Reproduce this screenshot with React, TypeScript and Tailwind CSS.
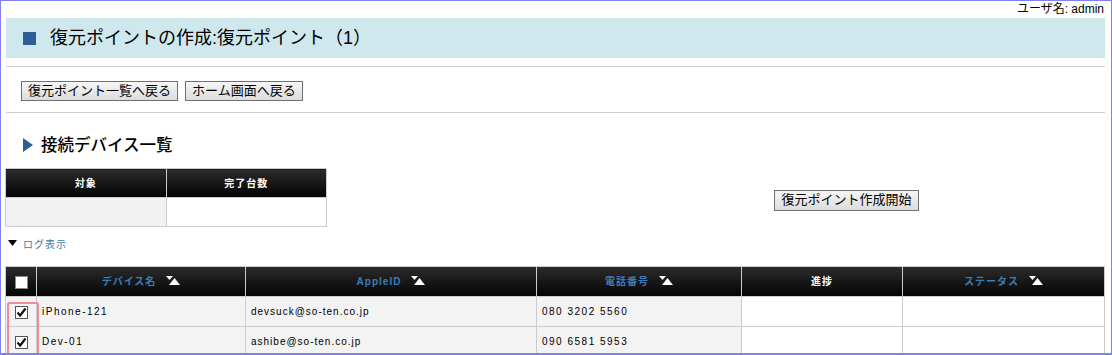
import React from "react";

const jp = { fontFamily: '"Liberation Sans", "Noto Sans CJK JP", sans-serif' };

function SortIcon() {
  return (
    <svg width="14" height="10" viewBox="0 0 14 10" className="inline-block ml-[10px] -mt-[2px] align-middle">
      <polygon points="0,0 7,0 3.5,4" fill="#fff" />
      <polygon points="3,9 14,9 8.5,2" fill="#fff" />
    </svg>
  );
}

function Check({ checked }: { checked?: boolean }) {
  return (
    <span className="inline-flex w-[13px] h-[13px] border border-[#555] bg-white items-center justify-center align-middle">
      {checked && (
        <svg width="11" height="11" viewBox="0 0 11 11">
          <path d="M1.5 5.5 L4.2 8.5 L9.5 1.5" stroke="#111" strokeWidth="2.2" fill="none" />
        </svg>
      )}
    </span>
  );
}

const btn =
  "h-[20px] px-[6px] border border-[#707070] bg-gradient-to-b from-[#f6f6f6] to-[#dcdcdc] text-[13px] leading-[18px] text-black whitespace-nowrap";

export default function App() {
  const rows = [
    { name: "iPhone-121", id: "devsuck@so-ten.co.jp", tel: "080 3202 5560" },
    { name: "Dev-01", id: "ashibe@so-ten.co.jp", tel: "090 6581 5953" },
  ];
  return (
    <div style={jp} className="w-[1112px] h-[355px] border border-[#8080f0] border-b-2 bg-white overflow-hidden relative">
      <div className="flex justify-end pr-[7px] pt-[1px] h-[17px] text-[12px] leading-[15px] text-black">
        ユーザ名: admin
      </div>
      <div className="ml-[4px] mr-[6px]">
        <div className="ml-[1px] h-[40px] bg-[#cfe8ee] flex items-center pl-[17px]">
          <span className="w-[13px] h-[13px] bg-[#2d5f96] mr-[14px]" />
          <span className="text-[18px] leading-[24px] text-black">復元ポイントの作成:復元ポイント（1）</span>
        </div>
        <div className="ml-[1px] mt-[8px] h-px bg-[#cccccc]" />
        <div className="mt-[14px] flex gap-[7px] pl-[16px]">
          <button className={btn}>復元ポイント一覧へ戻る</button>
          <button className={btn}>ホーム画面へ戻る</button>
        </div>
        <div className="ml-[1px] mt-[11px] h-px bg-[#cccccc]" />
        <div className="mt-[22px] flex items-center pl-[18px] h-[20px]">
          <svg width="10" height="14" viewBox="0 0 10 14" className="mr-[8px]">
            <polygon points="0,0 10,7 0,14" fill="#2d5f96" />
          </svg>
          <span className="text-[16.5px] leading-[20px] text-black font-medium">接続デバイス一覧</span>
        </div>
        <div className="mt-[13px] flex items-start">
          <table className="border-collapse w-[322px] text-[10px]">
            <thead>
              <tr className="h-[29px]">
                <th className="w-[161px] bg-gradient-to-b from-[#2c2c2c] to-[#050505] text-white font-bold border border-[#cccccc] tracking-[1px]">対象</th>
                <th className="w-[161px] bg-gradient-to-b from-[#2c2c2c] to-[#050505] text-white font-bold border border-[#cccccc] tracking-[1px]">完了台数</th>
              </tr>
            </thead>
            <tbody>
              <tr className="h-[29px]">
                <td className="bg-[#f1f1f1] border border-[#cccccc]" />
                <td className="bg-white border border-[#cccccc]" />
              </tr>
            </tbody>
          </table>
          <div className="ml-[447px] mt-[19px]">
            <button className={btn + " w-[145px] h-[21px] px-0 text-[12.5px]"}>復元ポイント作成開始</button>
          </div>
        </div>
        <div className="mt-[10px] flex items-center h-[14px] pl-[3px]">
          <svg width="9" height="6" viewBox="0 0 9 6" className="mr-[6px] -mt-[3px]">
            <polygon points="0,0 9,0 4.5,6" fill="#000" />
          </svg>
          <span className="text-[10px] text-[#3f7aa3] tracking-[1px]">ログ表示</span>
        </div>
        <table className="mt-[15px] border-collapse w-[1100px] text-[10px]">
          <thead>
            <tr className="h-[30px] bg-gradient-to-b from-[#2c2c2c] to-[#050505]">
              <th className="w-[31px] border border-[#cccccc]">
                <span className="inline-block w-[13px] h-[13px] bg-white border border-[#888] align-middle" />
              </th>
              <th className="w-[209px] border border-[#cccccc] text-[#3d7cba] font-bold tracking-[1px]">デバイス名<SortIcon /></th>
              <th className="w-[291px] border border-[#cccccc] text-[#3d7cba] font-bold tracking-[1px]">AppleID<SortIcon /></th>
              <th className="w-[205px] border border-[#cccccc] text-[#3d7cba] font-bold tracking-[1px]">電話番号<SortIcon /></th>
              <th className="w-[161px] border border-[#cccccc] text-white font-bold tracking-[1px]">進捗</th>
              <th className="border border-[#cccccc] text-[#3d7cba] font-bold tracking-[1px]">ステータス<SortIcon /></th>
            </tr>
          </thead>
          <tbody>
            {rows.map((r) => (
              <tr key={r.name} className="h-[30px] bg-[#f3f3f3]">
                <td className="border border-[#cccccc] text-center"><Check checked /></td>
                <td className="border border-[#cccccc] pl-[5px] tracking-[1.5px] text-black">{r.name}</td>
                <td className="border border-[#cccccc] pl-[5px] tracking-[1px] text-black">{r.id}</td>
                <td className="border border-[#cccccc] pl-[5px] tracking-[1.5px] text-black">{r.tel}</td>
                <td className="border border-[#cccccc] bg-white" />
                <td className="border border-[#cccccc] bg-white" />
              </tr>
            ))}
          </tbody>
        </table>
      </div>
      <div className="absolute left-[6px] top-[301px] w-[32px] h-[60px] border-2 border-[#f08a9a] rounded-[2px]" />
    </div>
  );
}
